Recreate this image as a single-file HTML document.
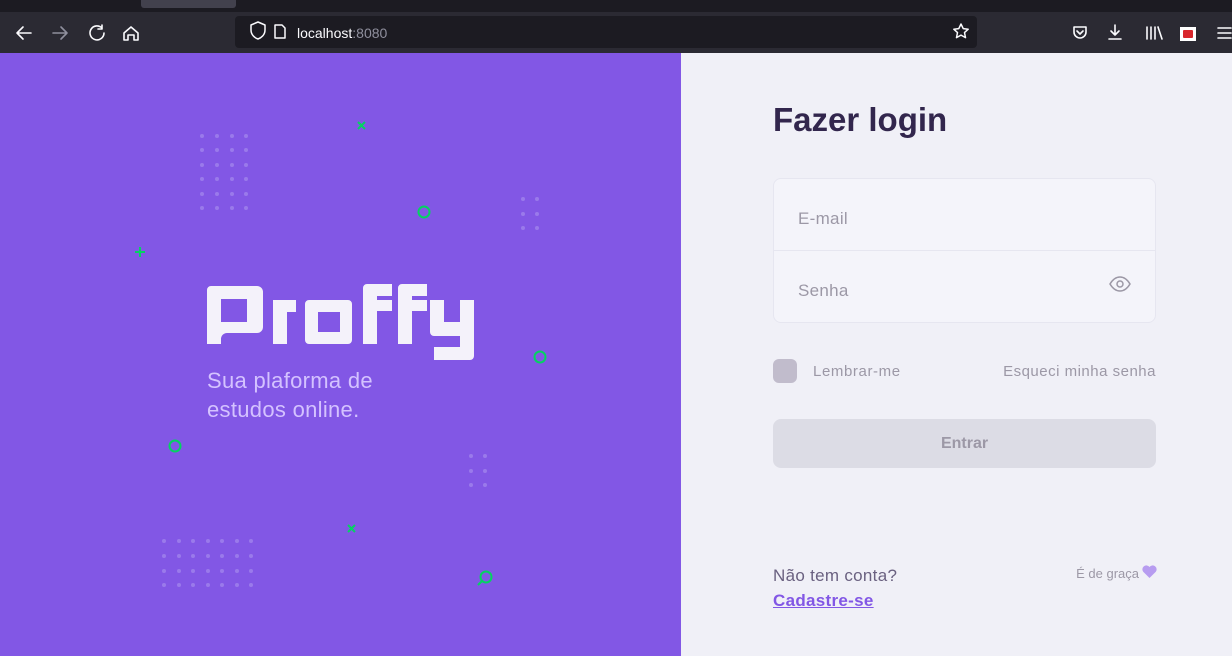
<!DOCTYPE html>
<html><head><meta charset="utf-8"><style>
*{margin:0;padding:0;box-sizing:border-box}
body{width:1232px;height:656px;overflow:hidden;font-family:"Liberation Sans",sans-serif;background:#f0f0f7;position:relative}
.top{position:absolute;left:0;top:0;width:1232px;height:12px;background:#1c1b22}
.tab{position:absolute;left:141px;top:0;width:95px;height:8px;background:#42414d;border-radius:0 0 3px 3px}
.bar{position:absolute;left:0;top:12px;width:1232px;height:41px;background:#2b2a33}
.url{position:absolute;left:235px;top:16px;width:742px;height:32px;background:#1c1b22;border-radius:4px}
.url span{position:absolute;left:62px;top:9px;font-size:14px;color:#fbfbfe}
.left{position:absolute;left:0;top:53px;width:681px;height:603px;background:#8257e5}
.right{position:absolute;left:681px;top:53px;width:551px;height:603px;background:#f0f0f7}
.t{position:absolute;white-space:nowrap}
</style></head><body>
<div class="top"><div class="tab"></div></div>
<div class="bar">
<svg width="1232" height="41" style="position:absolute;left:0;top:0" fill="none" stroke="#fbfbfe" stroke-width="1.6" stroke-linecap="round" stroke-linejoin="round">
<path d="M17 21h14M17 21l6-6M17 21l6 6"/>
<path d="M53 21h14M67 21l-6-6M67 21l-6 6" stroke="#8f8f9d"/>
<path d="M102 16a7 7 0 1 0 2 5M102 13v4h-4"/>
<path d="M124 21l7-6 7 6v7h-4v-5h-6v5h-4z"/>
<path d="M1074 15h12v5a6 6 0 0 1-12 0z M1077 19l3 3 3-3"/>
<path d="M1115 13v10M1111 19l4 4 4-4M1109 27h12"/>
<path d="M1147 15v12M1151 15v12M1155 15v12M1158 15l4 12"/>
<path d="M1218 16h13M1218 21h13M1218 26h13"/>
</svg>
<div style="position:absolute;left:1180px;top:15px;width:16px;height:14px;background:#fff"><div style="margin:3px 3px;width:10px;height:8px;background:#d8262c;border-radius:1px"></div></div>
</div>
<div class="url">
<svg width="742" height="32" style="position:absolute;left:0;top:0" fill="none" stroke="#fbfbfe" stroke-width="1.5" stroke-linejoin="round">
<path d="M16 9l7-3 7 3v5c0 5-4 8-7 9-3-1-7-4-7-9z"/>
<path d="M40 9h7l3 3v10h-10z"/>
<path d="M726 8l2.2 4.6 5 .6-3.7 3.4 1 5-4.5-2.5-4.5 2.5 1-5-3.7-3.4 5-.6z"/>
</svg>
<span>localhost<span style="position:static;color:#8f8f9d">:8080</span></span></div>
<div class="left">
<svg width="681" height="603" style="position:absolute;left:0;top:0">
<g fill="#9a7aeb">
<g id="d1"><circle cx="202" cy="83" r="2"/><circle cx="217" cy="83" r="2"/><circle cx="232" cy="83" r="2"/><circle cx="246" cy="83" r="2"/></g>
<use href="#d1" y="14"/><use href="#d1" y="29"/><use href="#d1" y="43"/><use href="#d1" y="58"/><use href="#d1" y="72"/>
<circle cx="523" cy="146" r="2"/><circle cx="537" cy="146" r="2"/><circle cx="523" cy="161" r="2"/><circle cx="537" cy="161" r="2"/><circle cx="523" cy="175" r="2"/><circle cx="537" cy="175" r="2"/>
<circle cx="471" cy="403" r="2"/><circle cx="485" cy="403" r="2"/><circle cx="471" cy="418" r="2"/><circle cx="485" cy="418" r="2"/><circle cx="471" cy="432" r="2"/><circle cx="485" cy="432" r="2"/>
<g id="d2"><circle cx="164" cy="488" r="2"/><circle cx="179" cy="488" r="2"/><circle cx="193" cy="488" r="2"/><circle cx="208" cy="488" r="2"/><circle cx="222" cy="488" r="2"/><circle cx="237" cy="488" r="2"/><circle cx="251" cy="488" r="2"/></g>
<use href="#d2" y="15"/><use href="#d2" y="30"/><use href="#d2" y="44"/>
</g>
<g fill="none" stroke="#04d361" stroke-width="2">
<path d="M358 69l7 7M365 69l-7 7"/><path d="M348 472l7 7M355 472l-7 7"/>
<path d="M135 199h10M140 194v10"/>
<circle cx="424" cy="159" r="5.5"/><circle cx="540" cy="304" r="5.5"/><circle cx="175" cy="393" r="5.5"/><circle cx="486" cy="524" r="5.5"/><path d="M482 528l-4 4"/>
</g>
<g fill="#f4f2fa" fill-rule="evenodd" transform="translate(0,-53)">
<path d="M211 286h46a6 6 0 0 1 6 6v35a6 6 0 0 1-6 6h-30a6 6 0 0 0-6 6v5h-14v-54a4 4 0 0 1 4-4z M221 299v23h26v-23z"/>
<path d="M273 300h23v12h-9v32h-14z"/>
<path d="M309 300h39a4 4 0 0 1 4 4v36a4 4 0 0 1-4 4h-39a4 4 0 0 1-4-4v-36a4 4 0 0 1 4-4z M318 312v20h22v-20z"/>
<path d="M367 284h25v12h-15v4h15v11h-15v33h-14v-56a4 4 0 0 1 4-4z"/>
<path d="M402 284h25v12h-15v4h15v11h-15v33h-14v-56a4 4 0 0 1 4-4z"/>
<path d="M430 300h14v22h16v-22h14v56a4 4 0 0 1-4 4h-36v-13h26v-11h-26a4 4 0 0 1-4-4z"/>
</g>
</svg>
<div class="t" style="left:207px;top:313px;font-size:22px;letter-spacing:0.3px;line-height:29px;color:#d4c2ff">Sua plaforma de<br>estudos online.</div>
</div>
<div class="right">
<div class="t" style="left:92px;top:48px;font-size:33px;font-weight:bold;color:#32264d">Fazer login</div>
<div style="position:absolute;left:92px;top:125px;width:383px;height:145px;background:#f4f4fa;border:1px solid #e6e6f0;border-radius:8px">
<div style="position:absolute;left:0;top:71px;width:100%;height:1px;background:#e6e6f0"></div>
<div class="t" style="left:24px;top:30px;font-size:17px;letter-spacing:0.3px;color:#9c98a6">E-mail</div>
<div class="t" style="left:24px;top:102px;font-size:17px;letter-spacing:0.3px;color:#9c98a6">Senha</div>
<svg width="22" height="16" style="position:absolute;left:335px;top:97px" fill="none" stroke="#9c98a6" stroke-width="1.5"><path d="M1 8c3-5 6-7 10-7s7 2 10 7c-3 5-6 7-10 7s-7-2-10-7z"/><circle cx="11" cy="8" r="3"/></svg>
</div>
<div style="position:absolute;left:92px;top:306px;width:24px;height:24px;background:#c1bccc;border-radius:6px"></div>
<div class="t" style="left:132px;top:310px;font-size:15px;letter-spacing:0.6px;color:#9c98a6">Lembrar-me</div>
<div class="t" style="right:76px;top:310px;font-size:15px;letter-spacing:0.5px;color:#9c98a6">Esqueci minha senha</div>
<div style="position:absolute;left:92px;top:366px;width:383px;height:49px;background:#dcdce5;border-radius:8px;text-align:center;line-height:49px;font-size:16px;font-weight:bold;color:#9c98a6">Entrar</div>
<div class="t" style="left:92px;top:513px;font-size:17px;letter-spacing:0.3px;color:#6a6180">Não tem conta?</div>
<div class="t" style="left:92px;top:538px;font-size:17px;letter-spacing:0.3px;font-weight:bold;color:#8257e5;text-decoration:underline">Cadastre-se</div>
<div class="t" style="right:93px;top:513px;font-size:13px;color:#9c98a6">É de graça</div>
<svg width="15" height="13" style="position:absolute;left:461px;top:512px"><path d="M7.5 13L1.2 6.8A3.6 3.6 0 0 1 7.5 2a3.6 3.6 0 0 1 6.3 4.8z" fill="#b79cf0"/></svg>
</div>
</body></html>
